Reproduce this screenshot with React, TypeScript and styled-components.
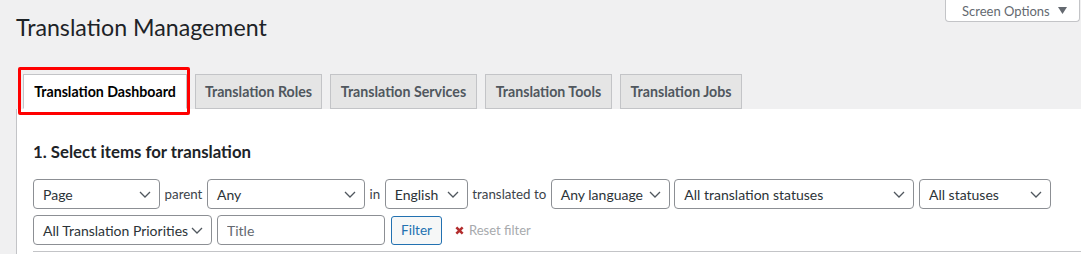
import React from 'react';
import styled, { createGlobalStyle } from 'styled-components';

const GlobalStyle = createGlobalStyle`
    body {
        margin: 0;
        background: #f0f0f1;
        font-family: Lato, "Noto Sans", sans-serif;
        color: #1d2327;
    }
`;

const Page = styled.div`
    height: 254px;
    overflow: hidden;
    background: #f0f0f1;
`;

const Header = styled.div`
    display: flex;
    justify-content: space-between;
    align-items: flex-start;
    height: 68px;
`;

const Title = styled.h1`
    margin: 0;
    padding: 13px 0 0 16px;
    font-size: 23.2px;
    font-weight: 400;
    line-height: 29px;
    color: #1d2327;
`;

const ScreenOptions = styled.button`
    display: flex;
    align-items: center;
    gap: 8px;
    box-sizing: border-box;
    width: 135px;
    height: 22px;
    margin-right: 1px;
    padding: 0 0 0 16px;
    background: #fff;
    border: 1px solid #c3c4c7;
    border-top: none;
    border-radius: 0 0 4px 4px;
    font-family: inherit;
    font-size: 13px;
    color: #646970;
`;

const Main = styled.div`
    padding-left: 16px;
`;

const Tabs = styled.div`
    display: flex;
    gap: 8px;
    padding: 6px 0 0 7px;
`;

const Tab = styled.div<{ $active?: boolean; $w: number }>`
    position: relative;
    display: flex;
    align-items: center;
    justify-content: center;
    box-sizing: border-box;
    width: ${(p) => p.$w}px;
    height: 35px;
    border: 1px solid #c3c4c7;
    border-bottom: ${(p) => (p.$active ? '1px solid #fff' : '1px solid #c3c4c7')};
    background: ${(p) => (p.$active ? '#fff' : '#e5e5e5')};
    color: ${(p) => (p.$active ? '#000' : '#50575e')};
    font-size: 14.2px;
    font-weight: 700;
    white-space: nowrap;
`;

const Highlight = styled.span`
    position: absolute;
    left: -6px;
    top: -8px;
    right: -4px;
    bottom: -7px;
    border: 3px solid #ff0000;
    border-radius: 2px;
    pointer-events: none;
`;

const Panel = styled.div`
    background: #fff;
    border-left: 1px solid #c3c4c7;
    padding: 32px 0 0 16px;
    height: 200px;
`;

const SectionTitle = styled.h2`
    margin: 0 0 16px;
    font-size: 16.8px;
    font-weight: 700;
    line-height: 22px;
    color: #1d2327;
`;

const FilterRow = styled.div<{ $gap: number }>`
    display: flex;
    align-items: center;
    gap: ${(p) => p.$gap}px;
    margin-bottom: 6px;
`;

const Label = styled.span`
    font-size: 13.3px;
    color: #3c434a;
`;

const SelectBox = styled.div<{ $w: number }>`
    display: flex;
    align-items: center;
    justify-content: space-between;
    box-sizing: border-box;
    width: ${(p) => p.$w}px;
    height: 30px;
    padding: 0 7px 0 9px;
    border: 1px solid #8c8f94;
    border-radius: 4px;
    background: #fff;
    font-size: 14px;
    color: #2c3338;
    white-space: nowrap;
`;

const TextInput = styled.input`
    box-sizing: border-box;
    width: 168px;
    height: 30px;
    padding: 0 9px;
    border: 1px solid #8c8f94;
    border-radius: 4px;
    font-family: inherit;
    font-size: 14px;
    color: #2c3338;

    &::placeholder {
        color: #646970;
    }
`;

const FilterButton = styled.button`
    box-sizing: border-box;
    width: 51px;
    height: 29px;
    margin-left: 1px;
    padding: 0;
    border: 1px solid #2271b1;
    border-radius: 3px;
    background: #f6f7f7;
    color: #2271b1;
    font-family: inherit;
    font-size: 13.5px;
`;

const ResetLink = styled.span`
    display: flex;
    align-items: center;
    gap: 5px;
    margin-left: 8px;
    font-size: 13px;
    color: #a7aaad;
`;

const Divider = styled.div`
    border-top: 1px solid #c3c4c7;
    margin-top: 5px;
`;

const Chevron = () => (
    <svg width="14" height="14" viewBox="0 0 14 14" fill="none">
        <path d="M2 5l5 5 5-5" stroke="#50575e" strokeWidth="1.3" />
    </svg>
);

const Select: React.FC<{ w: number; children: React.ReactNode }> = ({ w, children }) => (
    <SelectBox $w={w}>
        <span>{children}</span>
        <Chevron />
    </SelectBox>
);

const tabs = [
    { label: 'Translation Dashboard', w: 164 },
    { label: 'Translation Roles', w: 127 },
    { label: 'Translation Services', w: 147 },
    { label: 'Translation Tools', w: 127 },
    { label: 'Translation Jobs', w: 122 },
];

const App: React.FC = () => {
    return (
        <Page>
            <GlobalStyle />
            <Header>
                <Title>Translation Management</Title>
                <ScreenOptions>
                    Screen Options
                    <svg width="9" height="7" viewBox="0 0 9 7">
                        <path d="M0 0h9L4.5 7z" fill="#646970" />
                    </svg>
                </ScreenOptions>
            </Header>
            <Main>
                <Tabs>
                    {tabs.map((t, i) => (
                        <Tab key={t.label} $active={i === 0} $w={t.w}>
                            {t.label}
                            {i === 0 && <Highlight />}
                        </Tab>
                    ))}
                </Tabs>
                <Panel>
                    <SectionTitle>1. Select items for translation</SectionTitle>
                    <FilterRow $gap={4.6}>
                        <Select w={127}>Page</Select>
                        <Label>parent</Label>
                        <Select w={158}>Any</Select>
                        <Label>in</Label>
                        <Select w={83}>English</Select>
                        <Label>translated to</Label>
                        <Select w={119}>Any language</Select>
                        <Select w={240}>All translation statuses</Select>
                        <Select w={132}>All statuses</Select>
                    </FilterRow>
                    <FilterRow $gap={5}>
                        <Select w={179}>All Translation Priorities</Select>
                        <TextInput placeholder="Title" />
                        <FilterButton>Filter</FilterButton>
                        <ResetLink>
                            <svg width="9" height="9" viewBox="0 0 10 10">
                                <path d="M1.5 1.5l7 7M8.5 1.5l-7 7" stroke="#b32d2e" strokeWidth="2.8" />
                            </svg>
                            Reset filter
                        </ResetLink>
                    </FilterRow>
                    <Divider />
                </Panel>
            </Main>
        </Page>
    );
};

export default App;
